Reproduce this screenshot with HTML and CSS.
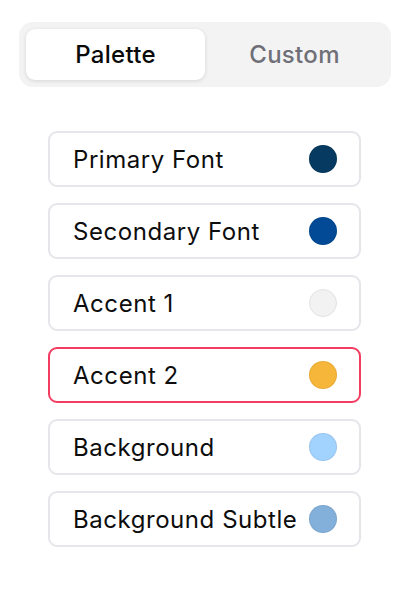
FILE: index.html
```html
<!DOCTYPE html>
<html>
<head>
<meta charset="utf-8">
<link rel="stylesheet" href="styles.css">
</head>
<body>
<div class="page">
  <div class="tabs">
    <div class="tab active">Palette</div>
    <div class="tab">Custom</div>
  </div>
  <div class="list">
    <div class="row"><span class="label">Primary Font</span><span class="dot c1"></span></div>
    <div class="row"><span class="label">Secondary Font</span><span class="dot c2"></span></div>
    <div class="row"><span class="label">Accent 1</span><span class="dot c3"></span></div>
    <div class="row selected"><span class="label">Accent 2</span><span class="dot c4"></span></div>
    <div class="row"><span class="label">Background</span><span class="dot c5"></span></div>
    <div class="row"><span class="label">Background Subtle</span><span class="dot c6"></span></div>
  </div>
</div>
</body>
</html>
```
FILE: styles.css
```css
* { box-sizing: border-box; }
html, body { margin: 0; padding: 0; background: #ffffff; }
body { font-family: Inter, "Noto Sans", sans-serif; color: #111111; }
.page { padding: 22px 21px 0 19px; }
.tabs {
  width: 372px;
  height: 65px;
  background: #f3f3f4;
  border-radius: 14px;
  padding: 7px;
  display: flex;
}
.tab {
  flex: 1;
  display: flex;
  align-items: center;
  justify-content: center;
  font-size: 24px;
  font-weight: 500;
  letter-spacing: 0.3px;
  color: #6f6f78;
  border-radius: 9px;
}
.tab.active {
  background: #ffffff;
  color: #0a0a0a;
  box-shadow: 0 1px 4px rgba(0,0,0,0.12);
}
.list {
  margin: 44px 0 0 29px;
  width: 313px;
  display: flex;
  flex-direction: column;
  gap: 16px;
}
.row {
  height: 56px;
  border: 2px solid #e5e5ea;
  border-radius: 9px;
  display: flex;
  align-items: center;
  justify-content: space-between;
  padding: 0 22px 0 23px;
}
.row.selected { border-color: #f23c60; }
.label { font-size: 24px; letter-spacing: 0.55px; color: #0d0d0d; }
.dot {
  width: 28px;
  height: 28px;
  border-radius: 50%;
  border: 1px solid rgba(0,0,0,0.06);
  flex: none;
}
.c1 { background: #063a60; }
.c2 { background: #024a95; }
.c3 { background: #f2f2f2; border-color: #e2e2e2; }
.c4 { background: #f6b63a; }
.c5 { background: #a2d2fe; }
.c6 { background: #83b0da; }
```
